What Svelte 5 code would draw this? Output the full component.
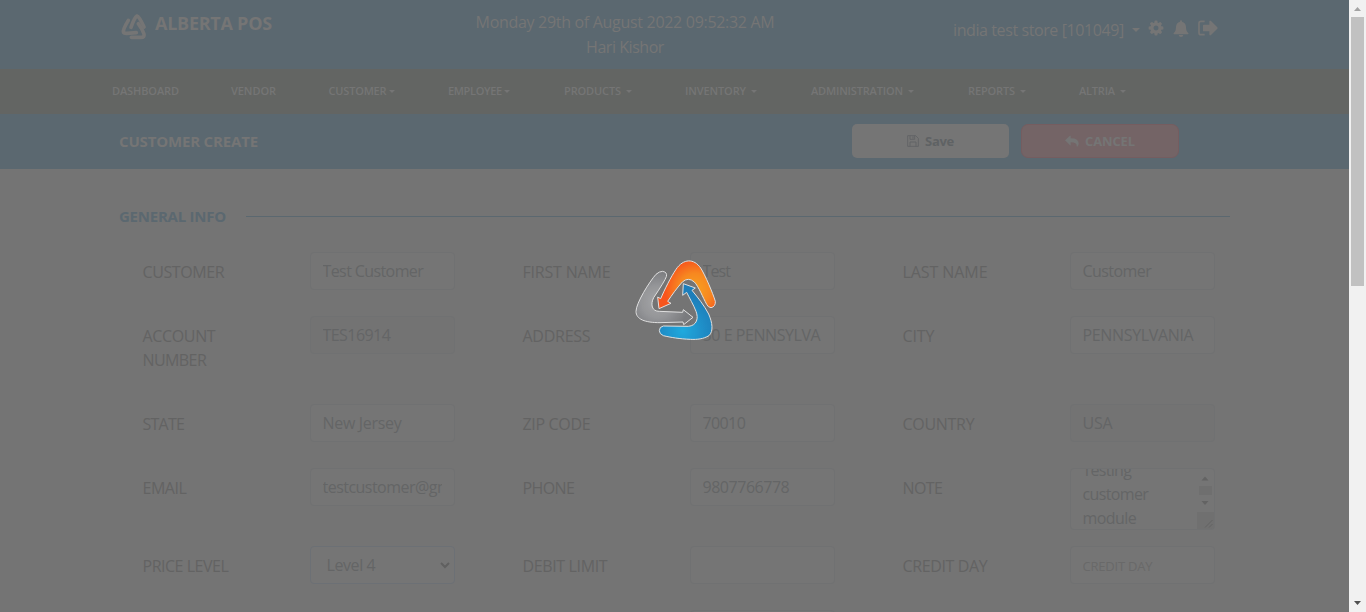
<script>
  // Spreads a label over a set width by adjusting its tracking.
  function fit(node, width) {
    if (!width) return;
    const natural = node.getBoundingClientRect().width;
    const n = node.textContent.length;
    node.style.letterSpacing = `${(width + 1 - natural) / (n - 0.5)}px`;
  }

  const nav = [
    { label: 'DASHBOARD', w: 66, col: 119 },
    { label: 'VENDOR', w: 44, col: 97.5 },
    { label: 'CUSTOMER', w: 57, col: 119.5, gap: 2.5 },
    { label: 'EMPLOYEE', w: 53, col: 116, gap: 2.5 },
    { label: 'PRODUCTS', w: 56, col: 121, gap: 5 },
    { label: 'INVENTORY', w: 60, col: 126, gap: 5 },
    { label: 'ADMINISTRATION', w: 91, col: 157, gap: 5 },
    { label: 'REPORTS', w: 46, col: 111, gap: 5 },
    { label: 'ALTRIA', w: 35, col: 60, gap: 5 }
  ];

  const rows = [
    { h: 64, cells: [
      { label: 'CUSTOMER', lw: 81, value: 'Test Customer', vw: 100 },
      { label: 'FIRST NAME', lw: 87, value: 'Test', vw: 27 },
      { label: 'LAST NAME', lw: 84, value: 'Customer', vw: 68 }
    ] },
    { h: 88, cells: [
      { label: 'ACCOUNT', lw: 72, label2: 'NUMBER', lw2: 63, value: 'TES16914', vw: 67, kind: 'disabled' },
      { label: 'ADDRESS', lw: 67, value: '50 E PENNSYLVA', vw: 117 },
      { label: 'CITY', lw: 31, value: 'PENNSYLVANIA', vw: 110 }
    ] },
    { h: 64, cells: [
      { label: 'STATE', lw: 41, value: 'New Jersey', vw: 78 },
      { label: 'ZIP CODE', lw: 67, value: '70010', vw: 42 },
      { label: 'COUNTRY', lw: 71, value: 'USA', vw: 29, kind: 'disabled' }
    ] },
    { h: 78, cells: [
      { label: 'EMAIL', lw: 43, value: 'testcustomer@gm', vw: 128 },
      { label: 'PHONE', lw: 51, value: '9807766778', vw: 86 },
      { label: 'NOTE', lw: 39, kind: 'note' }
    ] },
    { h: 64, cells: [
      { label: 'PRICE LEVEL', lw: 85, value: 'Level 4', vw: 48, kind: 'select' },
      { label: 'DEBIT LIMIT', lw: 84, value: '' },
      { label: 'CREDIT DAY', lw: 84, value: 'CREDIT DAY', vw: 69, kind: 'placeholder' }
    ] }
  ];

  const note = [
    { t: 'Testing', w: 48 },
    { t: 'customer', w: 65 },
    { t: 'module', w: 53 }
  ];
</script>

<div class="window">
  <main>
    <header>
      <div class="brand">
        <svg width="26" height="27" viewBox="64 39 78 81" fill="none" stroke="#757575" stroke-width="11" stroke-linecap="round" stroke-linejoin="round">
          <path d="M94 82Q105 51 112 48Q119 50 133 81" />
          <path d="M86 61Q71 86 71 95Q71 101 82 100L110 98" />
          <path d="M95 112H125Q135 112 133 102Q128 87 116 71" />
        </svg>
        <b><span use:fit={116}>ALBERTA POS</span></b>
      </div>
      <div class="clock">
        <div><span use:fit={298}>Monday 29th of August 2022 09:52:32 AM</span></div>
        <div><span use:fit={77}>Hari Kishor</span></div>
      </div>
      <div class="tools">
        <span class="store"><span use:fit={170}>india test store [101049]</span></span>
        <i class="caret big"></i>
        <svg class="cog" width="16" height="16" viewBox="64 64 1664 1664" fill="#757575"><path d="M1152 896q0-106-75-181t-181-75-181 75-75 181 75 181 181 75 181-75 75-181zm512-109v222q0 12-8 23t-20 13l-185 28q-19 54-39 91 35 50 107 138 10 12 10 25t-9 23q-27 37-99 108t-94 71q-12 0-26-9l-138-108q-44 23-91 38-16 136-29 186-7 28-36 28h-222q-14 0-24.5-8.5t-11.5-21.5l-28-184q-49-16-90-37l-141 107q-10 9-25 9-14 0-25-11-126-114-165-168-7-10-7-23 0-12 8-23 15-21 51-66.5t54-70.5q-27-50-41-99l-183-27q-13-2-21-12.5t-8-23.5v-222q0-12 8-23t19-13l186-28q14-46 39-92-40-57-107-138-10-12-10-24 0-10 9-23 26-36 98.5-107.5t94.5-71.5q13 0 26 10l138 107q44-23 91-38 16-136 29-186 7-28 36-28h222q14 0 24.5 8.5t11.5 21.5l28 184q49 16 90 37l142-107q9-9 24-9 13 0 25 10 129 119 165 170 7 8 7 22 0 12-8 23-15 21-51 66.5t-54 70.5q26 50 41 98l183 28q13 2 21 12.5t8 23.5z" /></svg>
        <svg class="bell" width="16" height="17" viewBox="0 0 48 51" fill="#757575"><path d="M24 1Q27 1 27 5Q38 8 39 20Q39 34 46 39Q48 43 44 43H4Q0 43 2 39Q9 34 9 20Q10 8 21 5Q21 1 24 1ZM17 45H31Q30 51 24 51Q18 51 17 45Z" /></svg>
        <svg class="out" width="20" height="16" viewBox="0 0 60 48"><path d="M20 4H9Q3 4 3 10V38Q3 44 9 44H20" fill="none" stroke="#757575" stroke-width="5" /><path d="M15 16Q15 14 17 14H34V4Q35 0 39 3L58 22Q60 24 58 26L39 45Q35 48 34 44V34H17Q15 34 15 32Z" fill="#757575" /></svg>
      </div>
    </header>

    <nav>
      {#each nav as item}
        <div class="nav-item" style="width:{item.col}px">
          <span use:fit={item.w}>{item.label}</span>
          {#if item.gap}<i class="caret" style="margin-left:{item.gap}px"></i>{/if}
        </div>
      {/each}
    </nav>

    <section class="bar">
      <h1><span use:fit={138}>CUSTOMER CREATE</span></h1>
      <div class="btn save">
        <svg width="12" height="12" viewBox="0 0 36 36" fill="none" stroke="#606365" stroke-width="2.600"><path d="M2 2H26L34 10V34H2ZM9 34V21H27V34M9 2V13H23V2M18 4V11" /></svg>
        <span use:fit={28}>Save</span>
      </div>
      <div class="btn cancel">
        <svg width="14" height="12" viewBox="0 0 42 36" fill="#757575"><path d="M0 16L15 2Q17 1 17 4V10Q42 10 41 27Q41 31 37 35Q36 36 35 34Q37 22 17 22V29Q17 32 15 31Z" /></svg>
        <span use:fit={49}>CANCEL</span>
      </div>
    </section>

    <div class="group">
      <h2><span use:fit={106}>GENERAL INFO</span></h2>
      <hr />
    </div>

    <div class="form">
      {#each rows as row}
        <div class="row" style="height:{row.h}px">
          {#each row.cells as c}
            <div class="cell">
              <div class="label">
                <div><span use:fit={c.lw}>{c.label}</span></div>
                {#if c.label2}<div><span use:fit={c.lw2}>{c.label2}</span></div>{/if}
              </div>
              {#if c.kind === 'note'}
                <div class="field note">
                  <div class="lines">
                    {#each note as l}<div><span use:fit={l.w}>{l.t}</span></div>{/each}
                  </div>
                  <svg width="18" height="60" viewBox="0 0 18 60">
                    <path d="M5.500 11.500L9 7.500L12.500 11.500ZM5.500 32L9 36L12.500 32Z" fill="#636363" />
                    <rect x="3" y="17" width="13" height="9" fill="#6f6f6f" />
                    <rect x="1" y="43" width="17" height="17" fill="#707070" />
                    <path d="M9 58.500L16.500 51M13 58.500L16.500 55" stroke="#5f5f5f" stroke-width="0.800" />
                  </svg>
                </div>
              {:else}
                <div class="field {c.kind ?? ''}">
                  <div class="clip">{#if c.value}<span use:fit={c.vw}>{c.value}</span>{/if}</div>
                  {#if c.kind === 'select'}
                    <svg width="10" height="7" viewBox="0 0 10 7" fill="none" stroke="#606060" stroke-width="2"><path d="M1 1L5 5L9 1" /></svg>
                  {/if}
                </div>
              {/if}
            </div>
          {/each}
        </div>
      {/each}
      <div class="row">
        <div class="cell"></div>
        <div class="cell"><div class="label"></div><div class="field"></div></div>
      </div>
    </div>
  </main>

  <aside>
    <svg width="17" height="17"><path d="M5 11L8.500 7L12 11Z" fill="#a3a3a3" /></svg>
    <div class="thumb"></div>
    <svg class="down" width="17" height="17"><path d="M5 6L8.500 10L12 6Z" fill="#505050" /></svg>
  </aside>

  <svg class="loader" width="110" height="100" viewBox="0 0 330 300" stroke="#e6e6e6" stroke-width="3" stroke-linejoin="round">
    <defs>
      <radialGradient id="orange" gradientUnits="userSpaceOnUse" cx="225" cy="118" r="105"><stop offset="0" stop-color="#ffa31c" /><stop offset=".45" stop-color="#ff8a1c" /><stop offset=".85" stop-color="#ff5419" /></radialGradient>
      <radialGradient id="grey" gradientUnits="userSpaceOnUse" cx="112" cy="155" r="95"><stop offset="0" stop-color="#a9aaac" /><stop offset=".5" stop-color="#97989b" /><stop offset="1" stop-color="#7b7c7f" /></radialGradient>
      <radialGradient id="blue" gradientUnits="userSpaceOnUse" cx="188" cy="242" r="105"><stop offset="0" stop-color="#1badE4" /><stop offset=".5" stop-color="#1b94d0" /><stop offset="1" stop-color="#197fbe" /></radialGradient>
    </defs>
    <path fill="url(#grey)" d="M128 64Q143 67 139 80Q134 94 101 143C91 163 95 184 118 184L188 187L190 179L219 202L191 224L189 216L120 218C75 218 48 208 48 184C48 160 88 95 108 73Q118 64 128 64Z" />
    <path fill="url(#orange)" d="M113 141L122 146C134 118 153 80 168 58C190 25 222 25 242 54C255 74 279 130 286 154Q287 170 273 173Q264 172 260 163C249 143 235 108 223 96Q205 80 187 96C170 115 155 136 143 154L153 160L117 176Z" />
    <path fill="url(#blue)" d="M190 101L226 114L216 121C235 144 252 166 266 192C277 218 281 243 267 257C250 267 232 269 211 268C180 267 151 262 130 257Q118 252 118 242Q118 230 130 228L205 229C231 227 236 204 228 184C220 163 208 144 200 127L188 136Z" />
  </svg>
</div>

<style>
  :global(body) { margin: 0; overflow: hidden; background: #757575; }
  .window {
    position: relative;
    display: flex;
    width: 1366px;
    height: 612px;
    overflow: hidden;
    font-family: "Open Sans", "Noto Sans", sans-serif;
    font-size: 16px;
    line-height: 24px;
    color: #757575;
    white-space: nowrap;
  }
  .window * { box-sizing: border-box; }
  main { width: 1349px; height: 612px; overflow: hidden; background: #747474; }
  span { display: inline-block; }
  svg { flex: none; display: block; }
  header {
    display: grid;
    grid-template-columns: 323px 362px 1fr;
    height: 69px;
    padding-left: 121px;
    background: #5b6870;
  }
  .brand { display: flex; padding-top: 11px; font-size: 18px; }
  .brand svg { margin: 2px 8px 0 0; }
  .clock { padding-top: 10px; line-height: 25px; text-align: center; }
  .tools { display: flex; padding: 18px 0 0 147px; }
  .store { width: 179px; }
  .caret {
    width: 0;
    height: 0;
    border: 3px solid transparent;
    border-top-color: currentColor;
    border-bottom: 0;
  }
  .caret.big { border-width: 4px 4px 0; margin: 10px 8px 0 0; }
  .cog { margin: 2px 9px 0 0; }
  .bell { margin: 2px 9px 0 0; }
  .out { margin-top: 2px; }
  nav {
    display: flex;
    align-items: center;
    height: 45px;
    padding: 0 0 1px 112px;
    background: #636563;
    font-size: 11px;
    font-weight: 600;
  }
  .nav-item { display: flex; align-items: center; flex: none; }
  .bar {
    display: flex;
    align-items: flex-start;
    height: 55px;
    padding: 10px 0 0 119px;
    background: #5b6870;
  }
  h1, h2 { margin: 0; font-size: 15px; font-weight: 700; }
  h1 { width: 733px; line-height: 34px; }
  .btn {
    display: flex;
    align-items: center;
    justify-content: center;
    width: 157px;
    height: 34px;
    border-radius: 5px;
    font-size: 13px;
    font-weight: 700;
  }
  .btn svg { margin-right: 6px; }
  .save { background: #757575; color: #5f6264; }
  .cancel { width: 158px; margin-left: 12px; border: 1px solid #755d60; border-radius: 7px; background: #746466; }
  .group { display: flex; align-items: center; height: 24px; margin: 35px 119px 0 119px; color: #5b6870; }
  h2 { width: 127px; }
  hr { flex: 1; height: 1px; margin: 0; border: 0; background: #5b6870; }
  .form { padding: 24px 0 0 142px; color: #636363; }
  .row { display: flex; }
  .cell { display: flex; align-items: flex-start; flex: none; width: 380px; }
  .label { width: 168px; padding: 8px 0 0 0.5px; }
  .field {
    display: flex;
    align-items: center;
    width: 145px;
    height: 38px;
    padding: 0 12px 0 11.5px;
    border: 1px solid #707172;
    border-radius: 4px;
    background: #757575;
    color: #646566;
  }
  .clip { flex: 1; height: 24px; overflow: hidden; }
  .disabled { background: #737373; }
  .select { padding: 0 4px 0 15.5px; border-color: #6c7075; }
  .placeholder { font-size: 13px; color: #696969; padding-top: 1px; }
  .note { align-items: flex-start; height: 62px; padding-right: 0; overflow: hidden; }
  .lines { flex: 1; margin-top: -11px; }
  aside { display: flex; flex-direction: column; align-items: center; width: 17px; height: 612px; background: #f1f1f1; }
  .thumb { width: 13px; height: 269px; background: #c1c1c1; }
  .down { margin-top: auto; }
  .loader { position: absolute; left: 620px; top: 250px; opacity: 0.95; }
</style>
